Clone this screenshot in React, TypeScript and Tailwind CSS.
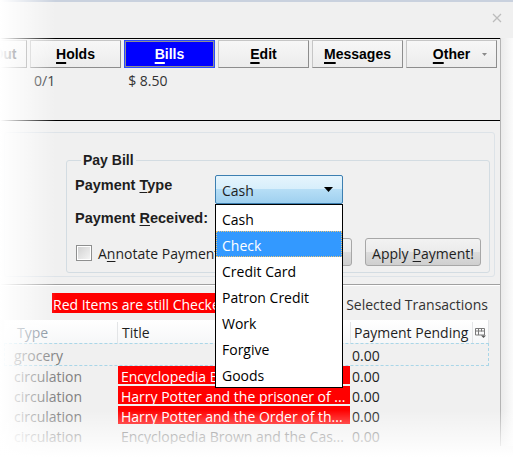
import React from "react";

const ui = "font-['Open_Sans',sans-serif]";
const bold = "font-['Liberation_Sans',Arial,sans-serif] font-bold";

function TabButton({
  label,
  mnemonic,
  active,
  arrow,
}: {
  label: string;
  mnemonic: number;
  active?: boolean;
  arrow?: boolean;
}) {
  const text = (
    <span className={`${bold} text-[14px] leading-4`}>
      {label.slice(0, mnemonic)}
      <span className="underline decoration-2 underline-offset-[3px]">
        {label[mnemonic]}
      </span>
      {label.slice(mnemonic + 1)}
    </span>
  );
  if (active) {
    return (
      <div className="w-[91px] h-[28px] shrink-0 border border-[#2a4bff] p-0">
        <div className="w-full h-full border border-[#8f8f8f] bg-[#0000ff] text-white flex items-center justify-center">
          {text}
        </div>
      </div>
    );
  }
  return (
    <div className="relative w-[91px] h-[28px] shrink-0 border border-[#c6c6c6] border-r-[#8d8d8d] border-b-[#8d8d8d] bg-[linear-gradient(#f7f7f7,#ececec)] text-black flex items-center justify-center">
      {text}
      {arrow && (
        <svg
          className="absolute right-[9px] top-[12px]"
          width="5"
          height="3"
          viewBox="0 0 5 3"
        >
          <path d="M0 0h5L2.5 3z" fill="#8a8a8a" />
        </svg>
      )}
    </div>
  );
}

const options = [
  "Cash",
  "Check",
  "Credit Card",
  "Patron Credit",
  "Work",
  "Forgive",
  "Goods",
];

const rows = [
  { type: "circulation", title: "Encyclopedia Brown Saves the ...", red: true },
  { type: "circulation", title: "Harry Potter and the prisoner of ...", red: true },
  { type: "circulation", title: "Harry Potter and the Order of th...", red: true },
  { type: "circulation", title: "Encyclopedia Brown and the Cas...", red: false },
];

export default function App() {
  return (
    <div
      className={`relative w-[513px] h-[457px] overflow-hidden bg-[#f0f0f0] ${ui} text-[14px] text-[#1e1e1e]`}
    >
      {/* window top edge */}
      <div className="h-[2px] bg-[#c9d1de]" />
      <div className="h-[36px] flex justify-end items-start pr-[11px] pt-[11px]">
        <svg width="10" height="10" viewBox="0 0 10 10">
          <path d="M1 1l8 8M9 1l-8 8" stroke="#bcbcbc" strokeWidth="1.3" />
        </svg>
      </div>

      <div className="flex">
        <div className="w-[501px] border-r border-[#b4b4b4] flex flex-col">
          {/* tab buttons */}
          <div className="border-t border-black pt-[1px] overflow-hidden">
            <div className="flex gap-[3px] ml-[-64px]">
              <TabButton label="Check Out" mnemonic={0} />
              <TabButton label="Holds" mnemonic={0} />
              <TabButton label="Bills" mnemonic={0} active />
              <TabButton label="Edit" mnemonic={0} />
              <TabButton label="Messages" mnemonic={0} />
              <TabButton label="Other" mnemonic={0} arrow />
            </div>
          </div>

          <div className="h-[20px] mt-[2px] flex items-center text-[#333]">
            <span className="ml-[34px]">0/1</span>
            <span className="ml-[73px]">$ 8.50</span>
          </div>
          <div className="h-[30px]" />
          <div className="h-px bg-black" />

          {/* pay bill panel */}
          <div className="mt-[11px] ml-[4px] mr-[5px] border border-[#dde3e8] rounded-[3px] pt-[19px] pl-[61px] pr-[4px] pb-[3px]">
            <fieldset className="border border-[#d3dce2] rounded-[3px] pl-[8px] pr-[8px] pt-[7px] pb-[6px]">
              <legend className={`${bold} text-[14px] leading-4 ml-[6px] px-[2px]`}>
                Pay Bill
              </legend>
              <div className="flex h-[29px]">
                <div className={`${bold} w-[140px] text-[14.5px] leading-4 pt-[2px]`}>
                  Payment <span className="underline underline-offset-2">T</span>ype
                </div>
                <div className="relative w-[128px] h-[29px]">
                  <div className="h-full border border-[#3c7fb1] rounded-[2px] bg-[linear-gradient(#e6f5fd,#d6eefb_50%,#b6def6_50%,#9fd0ef)] flex items-center justify-between pl-[6px] pr-[9px] pt-[2px]">
                    <span>Cash</span>
                    <svg width="9" height="5" viewBox="0 0 9 5" className="-mt-[2px]">
                      <path d="M0 0h9L4.5 5z" fill="#000" />
                    </svg>
                  </div>
                  <div className="absolute z-10 top-[29px] left-0 w-[128px] border border-black bg-white">
                    {options.map((o) =>
                      o === "Check" ? (
                        <div
                          key={o}
                          className="h-[26px] flex items-center pl-[5px] pt-[2px] bg-[#3399ff] text-white border border-dotted border-[#e8c47a]"
                        >
                          {o}
                        </div>
                      ) : (
                        <div key={o} className="h-[26px] flex items-center pl-[6px] pt-[2px] text-black">
                          {o}
                        </div>
                      )
                    )}
                  </div>
                </div>
              </div>
              <div className={`${bold} mt-[6px] text-[14.5px] leading-4`}>
                Payment <span className="underline underline-offset-2">R</span>eceived:
              </div>
              <div className="mt-[12px] h-[28px] flex items-center">
                <div className="ml-[1px] mt-[1px] w-[16px] h-[16px] border border-[#8e8f8f] p-px bg-white">
                  <div className="w-full h-full bg-[linear-gradient(135deg,#d2d2d2,#f4f4f4)]" />
                </div>
                <span className="ml-[6px] pt-[2px] text-[#1e1e1e]">
                  A<span className="underline underline-offset-2">n</span>notate Payment
                </span>
                <div className="ml-auto w-[72px] h-[28px] pt-[2px] border border-[#a7a7a7] rounded-[3px] bg-[linear-gradient(#f2f2f2,#ebebeb_50%,#dddddd_50%,#cfcfcf)] flex items-center justify-center">
                  Refresh
                </div>
                <div className="ml-[13px] w-[116px] h-[28px] pt-[2px] border border-[#a7a7a7] rounded-[3px] bg-[linear-gradient(#f2f2f2,#ebebeb_50%,#dddddd_50%,#cfcfcf)] flex items-center justify-center">
                  Apply <span className="underline underline-offset-2 ml-[4px]">P</span>ayment!
                </div>
              </div>
            </fieldset>
          </div>

          <div className="mt-[7px] h-px bg-[#a0a0a0]" />
          <div className="h-px bg-white" />

          {/* status line */}
          <div className="mt-[7px] h-[20px] flex items-center">
            <span className="ml-[52px] bg-[#ff0000] text-white px-[1px] pt-[2px] h-[20px] flex items-center whitespace-nowrap">
              Red Items are still Checked Out
            </span>
            <span className="ml-auto mr-[12px] pt-[3px] whitespace-nowrap text-[#333]">
              Total for Selected Transactions
            </span>
          </div>

          {/* table */}
          <div className="mt-[7px] ml-[4px] w-[485px]">
            <div className="h-[23px] pt-[2px] flex bg-[linear-gradient(#ffffff,#f6f7f8)] border-r border-[#e2e4e6]">
              <div className="w-[113px] pl-[13px] flex items-center text-[#7b8794]">Type</div>
              <div className="w-px bg-[#e3e5e7]" />
              <div className="w-[232px] pl-[4px] flex items-center">Title</div>
              <div className="w-px bg-[#e3e5e7]" />
              <div className="w-[121px] pl-[3px] flex items-center whitespace-nowrap">Payment Pending</div>
              <div className="w-px bg-[#e3e5e7]" />
              <div className="flex-1 flex items-center justify-center">
                <svg width="11" height="10" viewBox="0 0 11 10">
                  <path
                    d="M0.5 0.5h9v6.5h-9zM0.5 3h9M3.5 0.5v6.5M6.5 0.5v3"
                    stroke="#7a7a7a"
                    strokeWidth="1"
                    fill="none"
                  />
                  <path d="M6 7.5h5L8.5 10z" fill="#555" />
                </svg>
              </div>
            </div>
            <div className="h-[23px] pt-[2px] flex items-center border border-dashed border-[#a9d6e8]">
              <span className="w-[112px] pl-[9px] text-[#808080]">grocery</span>
              <span className="w-[233px]" />
              <span className="pl-[2px]">0.00</span>
            </div>
            {rows.map((r, i) => (
              <div key={i} className="h-[20px] flex">
                <div className="w-[114px] pl-[10px] pt-[2px] h-[18px] flex items-center text-[#808080]">
                  {r.type}
                </div>
                <div
                  className={`w-[232px] h-[18px] pl-[3px] pt-[2px] flex items-center overflow-hidden whitespace-nowrap ${
                    r.red ? "bg-[#ff0000] text-white" : "text-[#777]"
                  }`}
                >
                  {r.title}
                </div>
                <div className={`pl-[2px] pt-[2px] h-[18px] flex items-center ${r.red ? "" : "text-[#777]"}`}>
                  0.00
                </div>
              </div>
            ))}
          </div>
        </div>
        <div className="flex-1 bg-[linear-gradient(90deg,#ebebeb,#fbfbfb)]" />
      </div>

      {/* fades */}
      <div className="pointer-events-none absolute z-20 left-0 top-0 bottom-0 w-[56px] bg-[linear-gradient(90deg,#ffffff,rgba(255,255,255,0.75)_25%,rgba(255,255,255,0))]" />
      <div className="pointer-events-none absolute z-20 left-0 right-0 bottom-0 h-[47px] bg-[linear-gradient(rgba(255,255,255,0),#ffffff)]" />
    </div>
  );
}
